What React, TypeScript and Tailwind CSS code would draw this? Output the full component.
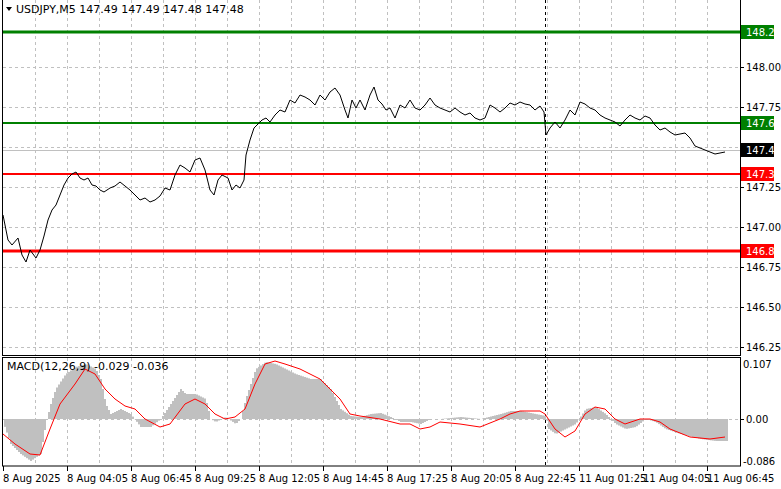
const price: [number, number][] = [
  [3,215],[8,240],[12,245],[18,238],[22,255],[26,262],[30,250],[36,258],[40,250],[44,236],[48,220],[52,210],[56,205],[60,195],[64,185],[68,178],[72,174],[76,172],[80,178],[84,180],[88,178],[92,185],[96,186],[100,190],[104,192],[110,188],[115,186],[120,182],[125,186],[130,190],[135,195],[140,200],[145,198],[150,202],[155,200],[160,196],[165,188],[170,190],[175,175],[180,165],[185,168],[190,172],[195,160],[200,158],[205,170],[210,190],[214,195],[218,180],[222,175],[228,178],[232,190],[236,185],[240,188],[244,180],[246,155],[250,140],[254,128],[258,124],[262,120],[266,118],[270,122],[275,115],[280,110],[285,112],[290,100],[295,103],[300,95],[305,97],[310,100],[315,105],[320,95],[325,100],[330,92],[335,88],[340,95],[345,110],[348,118],[352,100],[356,108],[360,100],[365,110],[370,95],[374,87],[378,100],[382,104],[386,110],[390,108],[395,118],[400,105],[405,108],[410,100],[415,108],[420,110],[425,105],[430,98],[435,105],[440,108],[445,110],[450,112],[455,108],[460,112],[465,115],[470,113],[475,118],[480,120],[485,118],[490,105],[495,108],[500,112],[505,108],[510,103],[515,105],[520,102],[525,104],[530,105],[535,110],[540,106],[544,112],[546,135],[550,128],[555,122],[560,128],[565,120],[570,110],[575,115],[580,102],[585,104],[590,108],[595,110],[600,115],[605,118],[610,120],[615,122],[620,126],[625,120],[630,115],[635,118],[640,120],[645,116],[650,118],[655,125],[660,130],[665,128],[670,132],[675,135],[680,134],[685,133],[690,138],[695,146],[700,148],[705,150],[710,152],[715,154],[720,153],[725,152],
];

const hist: [number, number][] = [[3,-5],[10,-25],[20,-35],[30,-42],[40,-35],[45,-5],[50,15],[55,30],[65,45],[75,52],[85,55],[95,50],[100,40],[105,15],[110,5],[120,10],[130,5],[140,-8],[150,-8],[160,0],[170,15],[180,30],[185,25],[195,25],[205,20],[210,0],[215,-3],[225,2],[235,-5],[240,0],[245,20],[255,50],[265,57],[275,55],[285,50],[295,45],[310,40],[320,40],[330,30],[340,10],[350,3],[360,2],[370,5],[380,6],[390,2],[400,-3],[410,-3],[420,-5],[430,0],[440,0],[460,2],[480,0],[500,5],[510,8],[520,8],[530,6],[545,3],[548,-10],[555,-15],[565,-10],[575,-5],[585,10],[595,12],[605,5],[615,-5],[625,-10],[635,-8],[645,0],[655,-3],[665,-10],[680,-15],[700,-20],[715,-22],[725,-22]];

const signal: [number, number][] = [[3,-15],[15,-25],[30,-35],[40,-36],[50,-10],[60,15],[75,35],[85,50],[95,45],[105,30],[115,20],[125,13],[135,10],[145,0],[160,-8],[170,-5],[185,15],[195,20],[205,15],[215,5],[225,0],[235,2],[245,10],[255,35],[265,55],[275,58],[285,55],[300,50],[320,40],[340,20],[350,5],[360,3],[380,0],[400,-5],[410,-5],[420,-10],[430,-8],[440,-3],[460,-5],[480,-8],[500,0],[510,5],[520,8],[540,8],[545,5],[555,-10],[565,-18],[575,-12],[585,5],[595,12],[605,10],[615,0],[625,-5],[640,0],[650,0],[660,-3],[670,-10],[690,-18],[710,-20],[725,-18]];

const interp = (pts: [number, number][], x: number) => {
  for (let i = 1; i < pts.length; i++) {
    if (x <= pts[i][0]) {
      const [x0, y0] = pts[i - 1];
      const [x1, y1] = pts[i];
      return y0 + ((y1 - y0) * (x - x0)) / (x1 - x0);
    }
  }
  return pts[pts.length - 1][1];
};

const ZERO = 419;
const vGrid = Array.from({ length: 22 }, (_, i) => 35 + i * 32).filter(x => x < 740);
const hGrid = [67, 107, 147, 187, 227, 267, 307, 347];
const priceLabels: [string, number][] = [["148.00",67],["147.75",107],["147.25",187],["147.00",227],["146.75",267],["146.50",307],["146.25",347]];
const timeLabels = ["8 Aug 2025","8 Aug 04:05","8 Aug 06:45","8 Aug 09:25","8 Aug 12:05","8 Aug 14:45","8 Aug 17:25","8 Aug 20:05","8 Aug 22:45","11 Aug 01:25","11 Aug 04:05","11 Aug 06:45"];
const levels: [string, number, string, number][] = [["148.22",32,"#008000",3],["147.65",123,"#008000",2],["147.33",174,"#ff0000",2],["146.85",251,"#ff0000",3]];

export default function App() {
  const bars = [];
  for (let x = 4; x <= 726; x += 2) {
    const v = interp(hist, x);
    bars.push(<rect key={x} x={x} y={v > 0 ? ZERO - v : ZERO} width={2} height={Math.abs(v)} fill="#c0c0c0" />);
  }
  const sig = signal.map(([x, v]) => `${x},${ZERO - v}`).join(" ");
  return (
    <div className="w-[781px] h-[489px] bg-white overflow-hidden" style={{ fontFamily: "Tahoma, 'DejaVu Sans', sans-serif" }}>
      <svg width="781" height="489" className="block" fontSize="10">
        <g stroke="#c0c0c0" strokeDasharray="3 3" strokeWidth="1">
          {vGrid.map(x => <line key={x} x1={x + 0.5} y1={0} x2={x + 0.5} y2={355} />)}
          {vGrid.map(x => <line key={"m" + x} x1={x + 0.5} y1={358} x2={x + 0.5} y2={466} />)}
          {hGrid.map(y => <line key={y} x1={3} y1={y + 0.5} x2={740} y2={y + 0.5} />)}
          <line x1={3} y1={ZERO + 0.5} x2={740} y2={ZERO + 0.5} />
        </g>
        <line x1={545.5} y1={0} x2={545.5} y2={466} stroke="#000" strokeDasharray="3 3" />
        <line x1={3} y1={150.5} x2={740} y2={150.5} stroke="#c0c0c0" />
        {levels.map(([, y, c, w]) => <line key={y} x1={3} y1={y} x2={740} y2={y} stroke={c} strokeWidth={w} />)}
        <polyline points={price.map(([x, y]) => `${x},${y}`).join(" ")} fill="none" stroke="#000" strokeWidth="1" />
        {bars}
        <polyline points={sig} fill="none" stroke="#ff0000" strokeWidth="1" />
        <g fill="none" stroke="#000">
          <rect x={2.5} y={-1} width={738} height={356.5} />
          <rect x={2.5} y={357.5} width={738} height={108.5} />
        </g>
        <path d="M6 7 L12 7 L9 11 Z" fill="#000" />
        <text x={16} y={13} fill="#000" fontSize="11">USDJPY,M5  147.49 147.49 147.48 147.48</text>
        <text x={7} y={370} fill="#000" fontSize="11">MACD(12,26,9) -0.029 -0.036</text>
        {priceLabels.map(([t, y]) => (
          <g key={t}>
            <line x1={740} y1={y + 0.5} x2={744} y2={y + 0.5} stroke="#000" />
            <text x={746} y={y + 4} fill="#000">{t}</text>
          </g>
        ))}
        {levels.map(([t, y, c]) => (
          <g key={t}>
            <rect x={741} y={y - 7} width={33} height={14} fill={c} />
            <text x={746} y={y + 4} fill="#fff">{t}</text>
          </g>
        ))}
        <rect x={741} y={143} width={33} height={14} fill="#000" />
        <text x={746} y={154} fill="#fff">147.48</text>
        <text x={743} y={368} fill="#000">0.107</text>
        <text x={746} y={423} fill="#000">0.00</text>
        <line x1={740} y1={ZERO + 0.5} x2={744} y2={ZERO + 0.5} stroke="#000" />
        <text x={743} y={465} fill="#000">-0.086</text>
        {timeLabels.map((t, i) => (
          <g key={t}>
            <line x1={3.5 + i * 64} y1={466} x2={3.5 + i * 64} y2={471} stroke="#000" />
            <text x={3 + i * 64} y={482} fill="#000">{t}</text>
          </g>
        ))}
      </svg>
    </div>
  );
}
